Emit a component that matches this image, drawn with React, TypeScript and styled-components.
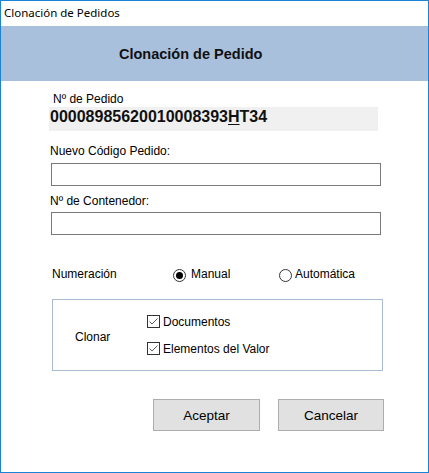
import styled, { createGlobalStyle } from 'styled-components';
import { useState } from 'react';

const GlobalStyle = createGlobalStyle`
  * {
    box-sizing: border-box;
  }
  body {
    margin: 0;
    background: #ffffff;
    font-family: "Liberation Sans", Arial, sans-serif;
    color: #000000;
  }
`;

const Window = styled.div`
  width: 429px;
  height: 473px;
  border: 1px solid #1883d7;
  display: flex;
  flex-direction: column;
  background: #ffffff;
`;

const TitleBar = styled.div`
  height: 25px;
  padding: 4px 0 0 3px;
  font-family: "Noto Sans", "Open Sans", sans-serif;
  font-size: 11.5px;
  line-height: 16px;
  color: #000000;
`;

const Header = styled.div`
  height: 55px;
  background: #a8c0dc;
  display: flex;
  align-items: center;
  padding-left: 118px;
`;

const HeaderTitle = styled.h1`
  margin: 0;
  font-size: 14.5px;
  font-weight: bold;
  color: #111111;
`;

const Body = styled.div`
  display: flex;
  flex-direction: column;
  align-items: flex-start;
  padding-left: 48px;
`;

const Label = styled.label<{ $top: number; $left?: number }>`
  display: block;
  margin-top: ${p => p.$top}px;
  margin-left: ${p => p.$left ?? 1}px;
  font-size: 12px;
  line-height: 14px;
`;

const ReadOnlyValue = styled.div`
  margin-top: 1px;
  width: 329px;
  height: 24px;
  background: #f0f0f0;
  padding-left: 1px;
  font-size: 16px;
  font-weight: bold;
  line-height: 20px;
  color: #111111;

  u {
    text-decoration-thickness: 1px;
    text-underline-offset: 2px;
  }
`;

const TextBox = styled.input<{ $top: number }>`
  display: block;
  margin-top: ${p => p.$top}px;
  margin-left: 2px;
  width: 330px;
  height: 23px;
  border: 1px solid #7a7a7a;
  background: #ffffff;
  padding: 0 3px;
  font-family: "Liberation Sans", Arial, sans-serif;
  font-size: 12px;
  outline: none;
`;

const OptionRow = styled.div`
  margin-top: 32px;
  margin-left: 3px;
  display: grid;
  grid-template-columns: 121px 106px auto;
  font-size: 12px;
  line-height: 14px;
`;

const Option = styled.label<{ $gap: number }>`
  display: flex;
  align-items: flex-start;
  gap: ${p => p.$gap}px;
  cursor: pointer;
`;

const RadioCircle = styled.span<{ $on: boolean }>`
  margin-top: 2px;
  width: 13px;
  height: 13px;
  border-radius: 50%;
  border: 1px solid #333333;
  display: flex;
  align-items: center;
  justify-content: center;

  &::after {
    content: '';
    width: 7px;
    height: 7px;
    border-radius: 50%;
    background: #000000;
    display: ${p => (p.$on ? 'block' : 'none')};
  }
`;

const GroupBox = styled.div`
  margin-top: 17px;
  margin-left: 3px;
  width: 331px;
  height: 72px;
  border: 1px solid #a9bbd3;
  display: grid;
  grid-template-columns: 72px auto;
  align-items: center;
  padding-left: 22px;
  font-size: 12px;
  line-height: 14px;
`;

const GroupLabel = styled.span`
  margin-top: 4px;
`;

const CheckList = styled.div`
  display: flex;
  flex-direction: column;
  gap: 13px;
`;

const CheckItem = styled.label`
  display: flex;
  align-items: center;
  gap: 3px;
  cursor: pointer;
`;

const CheckBox = styled.span`
  width: 13px;
  height: 13px;
  border: 1px solid #333333;
  display: flex;
  align-items: center;
  justify-content: center;
  background: #ffffff;
`;

const ButtonRow = styled.div`
  margin-top: 28px;
  margin-left: 104px;
  display: flex;
  gap: 18px;
`;

const Button = styled.button<{ $w: number }>`
  width: ${p => p.$w}px;
  height: 32px;
  background: #e1e1e1;
  border: 1px solid #adadad;
  font-family: "Liberation Sans", Arial, sans-serif;
  font-size: 13.5px;
  color: #000000;
  padding: 0;
  cursor: pointer;

  &:hover {
    background: #e5f1fb;
    border-color: #0078d7;
  }
`;

const Check = () => (
  <svg width="11" height="11" viewBox="0 0 11 11">
    <polyline points="1.5,5.5 4,8 9.5,2.5" fill="none" stroke="#4a4a4a" strokeWidth="0.9" />
  </svg>
);

export default function App() {
  const [mode, setMode] = useState<'manual' | 'auto'>('manual');
  const [docs, setDocs] = useState(true);
  const [values, setValues] = useState(true);

  return (
    <>
      <GlobalStyle />
      <Window>
        <TitleBar>Clonación de Pedidos</TitleBar>
        <Header>
          <HeaderTitle>Clonación de Pedido</HeaderTitle>
        </Header>

        <Body>
          <Label $top={11} $left={4}>Nº de Pedido</Label>
          <ReadOnlyValue>
            00008985620010008393<u>H</u>T34
          </ReadOnlyValue>

          <Label $top={13}>Nuevo Código Pedido:</Label>
          <TextBox $top={5} />

          <Label $top={8}>Nº de Contenedor:</Label>
          <TextBox $top={4} />

          <OptionRow>
            <span>Numeración</span>
            <Option $gap={5} onClick={() => setMode('manual')}>
              <RadioCircle $on={mode === 'manual'} />
              Manual
            </Option>
            <Option $gap={3} onClick={() => setMode('auto')}>
              <RadioCircle $on={mode === 'auto'} />
              Automática
            </Option>
          </OptionRow>

          <GroupBox>
            <GroupLabel>Clonar</GroupLabel>
            <CheckList>
              <CheckItem onClick={() => setDocs(v => !v)}>
                <CheckBox>{docs && <Check />}</CheckBox>
                Documentos
              </CheckItem>
              <CheckItem onClick={() => setValues(v => !v)}>
                <CheckBox>{values && <Check />}</CheckBox>
                Elementos del Valor
              </CheckItem>
            </CheckList>
          </GroupBox>

          <ButtonRow>
            <Button $w={107}>Aceptar</Button>
            <Button $w={106}>Cancelar</Button>
          </ButtonRow>
        </Body>
      </Window>
    </>
  );
}
